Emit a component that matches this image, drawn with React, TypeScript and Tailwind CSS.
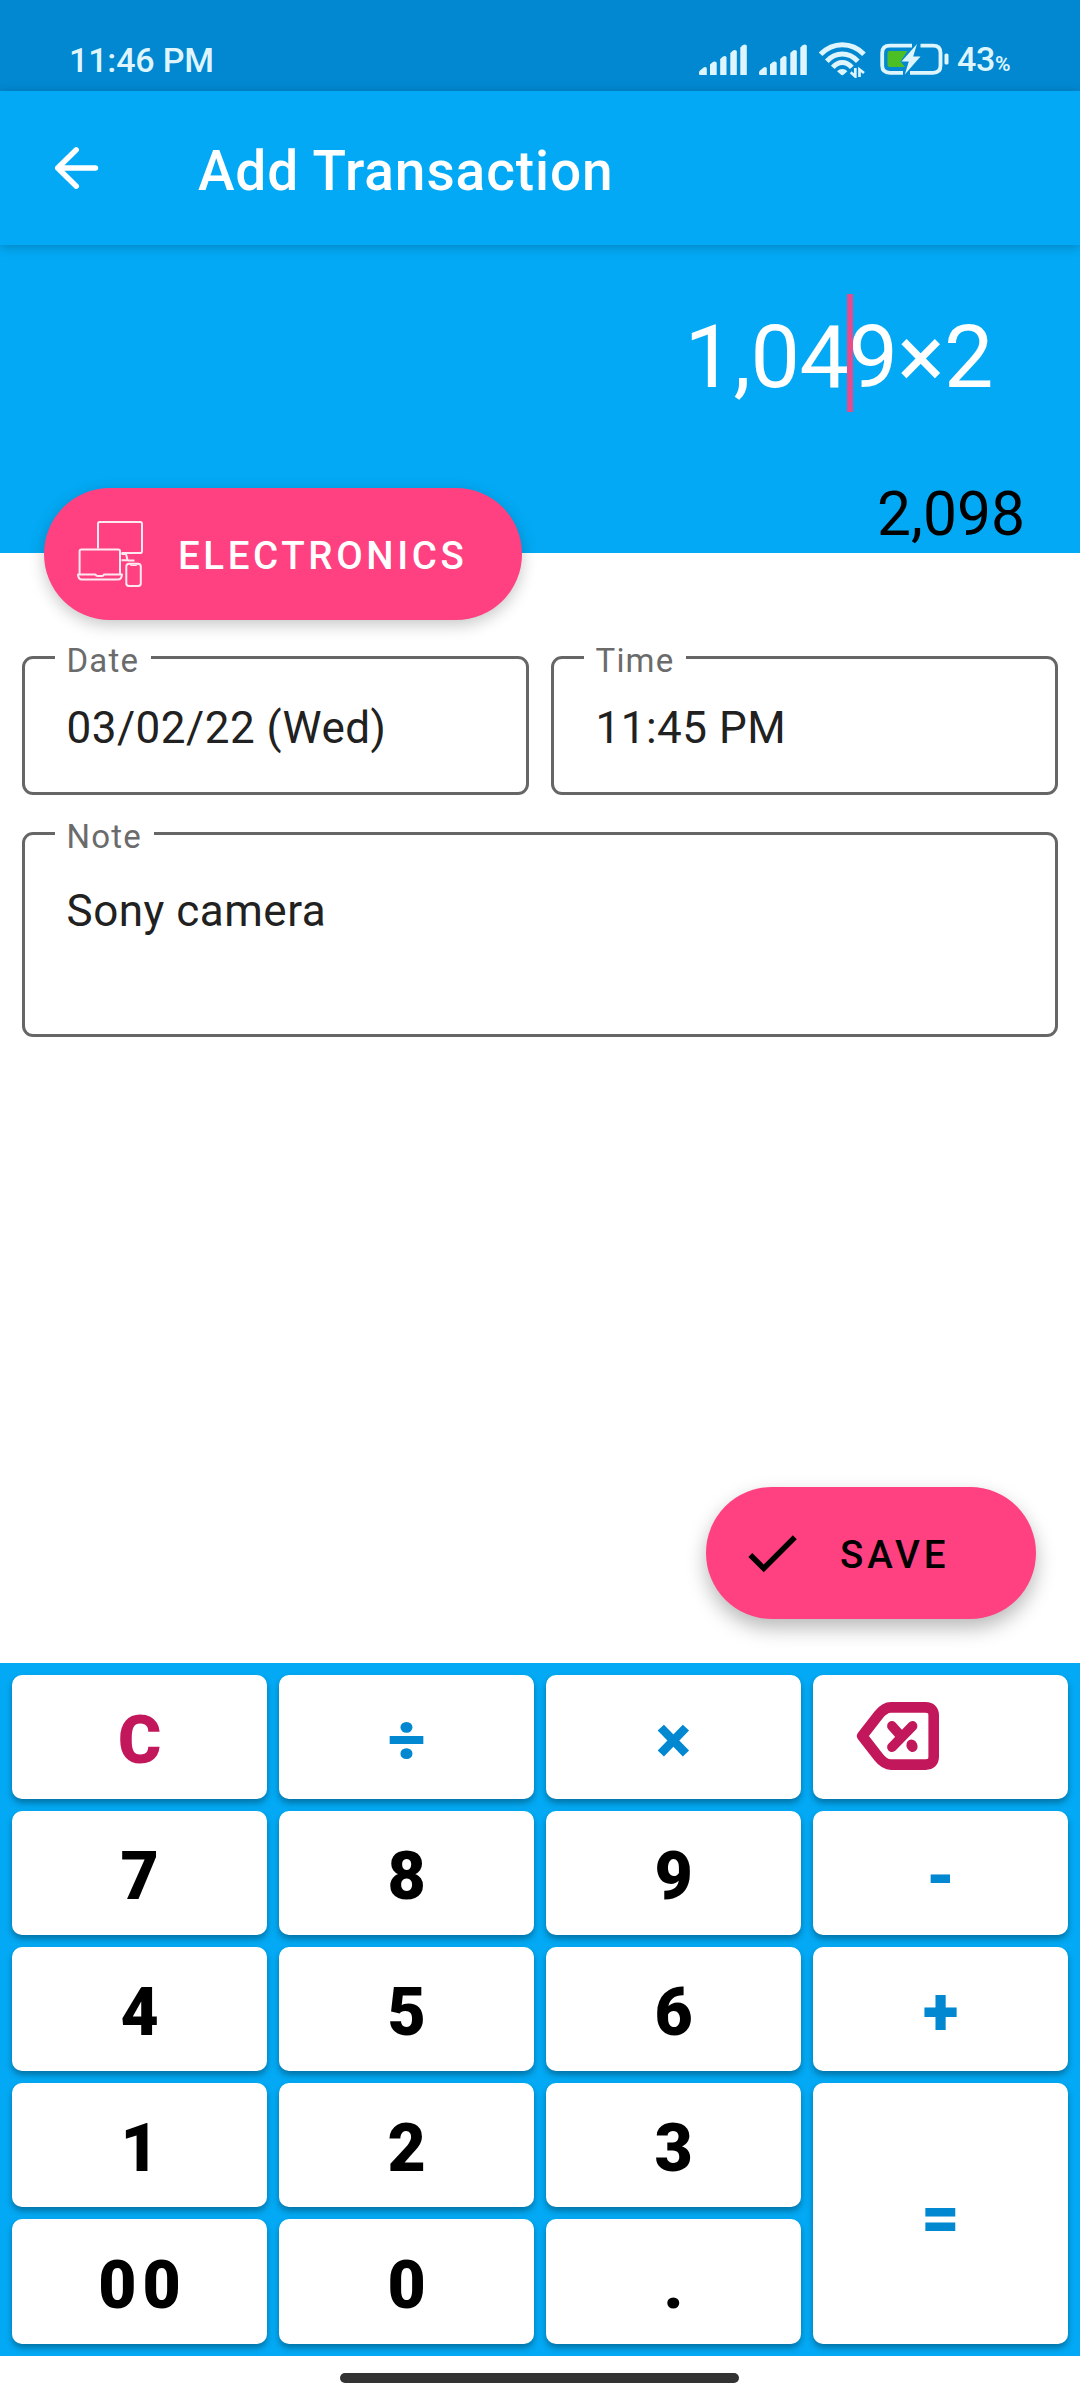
import type { ReactNode } from "react";

function SignalBars() {
  return (
    <svg width="48" height="31" viewBox="0 0 48 31" fill="#dff5fd">
      <path d="M0 28.5Q0 27.4 1 26.6L4 24Q5 23 6.2 23Q7.8 23 7.8 24.5V31H1.2Q0 31 0 29.8Z" />
      <path d="M11 20.5L13.5 18.3Q14.5 17.5 15.7 17.5Q17.7 17.5 17.7 19V31H11Z" />
      <path d="M21.2 15L23.7 12.8Q24.7 12 25.7 12Q27.5 12 27.5 13.5V31H21.2Z" />
      <path d="M31.3 9L33.8 6.8Q34.8 6 35.8 6Q37.8 6 37.8 7.5V31H31.3Z" />
      <path d="M41.3 3.5L43.8 1.2Q44.8 .4 45.8 .4Q47.8 .4 47.8 2V31H41.3Z" />
    </svg>
  );
}

function WifiIcon() {
  return (
    <svg width="47" height="36" viewBox="0 0 47 36" fill="none" stroke="#dff5fd" strokeLinecap="butt">
      <path d="M1.6 12.3Q11 2.8 23.3 2.8Q35.6 2.8 45 12.3" strokeWidth="5" />
      <path d="M7.8 19.2Q14.5 12 23.3 12Q32 12 38.8 19.2" strokeWidth="5" />
      <path d="M13.8 25.4Q18 20.4 23.3 20.4Q28.6 20.4 32.8 25.4" strokeWidth="5" />
      <path d="M18 29.3Q20.3 27 23.3 27Q26.3 27 28.4 29.3L24.8 32.6Q23.3 34 21.8 32.6Z" fill="#dff5fd" stroke="none" />
      <path d="M36.3 26V34.5L31.7 30.2M40.5 35V27.5L45 31" strokeWidth="2.7" />
    </svg>
  );
}

function BatteryIcon() {
  return (
    <svg width="69" height="33" viewBox="0 0 69 33" fill="none">
      <path d="M32 2.7H10Q2.2 2.7 2.2 10V22.5Q2.2 29.8 10 29.8H23M40.5 2.7H53Q60.5 2.7 60.5 10V22.5Q60.5 29.8 53 29.8H30" stroke="#dff5fd" strokeWidth="3.8" />
      <path d="M9.5 8H27.5L20.5 18.6L25 24H9.5Q7.5 24 7.5 22V10Q7.5 8 9.5 8Z" fill="#4cbf26" />
      <path d="M37 1L21.5 18.5H28.8L24.8 31.5L40.5 13.5H33.2Z" fill="#dff5fd" />
      <rect x="64.5" y="10.5" width="4" height="11" rx="1.6" fill="#dff5fd" />
    </svg>
  );
}

function BackArrow() {
  return (
    <svg width="44" height="44" viewBox="0 0 44 44" fill="none" stroke="#fff" strokeWidth="5.4" strokeLinecap="round" strokeLinejoin="round">
      <path d="M40.5 22H2.7M21.3 3.8L2.7 22L21.3 40.2" />
    </svg>
  );
}

function DevicesIcon() {
  return (
    <svg width="66" height="66" viewBox="0 0 66 66" fill="none" stroke="#ffe9f1" strokeWidth="2" strokeLinejoin="round">
      <path d="M21 27.5V2.8Q21 1 22.8 1H63.2Q65 1 65 2.8V30.2Q65 32 63.2 32H44.5" />
      <path d="M2.6 53V30.3Q2.6 28.5 4.4 28.5H41.2Q43 28.5 43 30.3V53" />
      <path d="M1 53.4H18.5Q19 55 20.5 55H25Q26.5 55 27 53.4H45Q44.6 58.6 41 58.6H5Q1.2 58.6 1 53.4Z" />
      <path d="M44.5 33H49L50.6 39.2H44.5M50.6 39.6H57.5" />
      <rect x="49.3" y="42.8" width="14.5" height="22.3" rx="2.8" />
      <path d="M53 43.2Q53.2 44.4 54.4 44.4H58.8Q60 44.4 60.2 43.2" strokeWidth="1.2" />
    </svg>
  );
}

function CheckIcon() {
  return (
    <svg width="66" height="66" viewBox="0 0 24 24" fill="#000">
      <path d="M9 16.17L4.83 12l-1.42 1.41L9 19 21 7l-1.41-1.41z" />
    </svg>
  );
}

function BackspaceIcon() {
  return (
    <svg width="84" height="68" viewBox="0 0 84 68" fill="none" stroke="#c2185b" strokeLinecap="round" strokeLinejoin="round">
      <path d="M6.2 34L22.5 13Q28.5 5.4 35 5.4H69.5Q77.7 5.4 77.7 13.5V54.5Q77.7 62.6 69.5 62.6H35Q28.5 62.6 22.5 55Z" strokeWidth="10.6" />
      <path d="M56.5 24L36 45.2M36 24L44 33" strokeWidth="9.8" />
      <ellipse cx="56" cy="43.8" rx="5.4" ry="6.4" transform="rotate(-25 56 43.8)" fill="#c2185b" stroke="none" />
    </svg>
  );
}

function Field({ label, value, className }: { label: string; value: string; className: string }) {
  return (
    <div className={`relative rounded-[11px] border-[3px] border-[#666] pl-[41.5px] ${className}`}>
      <span className="absolute -top-[18px] left-[30px] bg-white pr-[12px] pl-[11.5px] text-[33px] leading-[40px] tracking-[1.2px] text-[#6b6b6b]">
        {label}
      </span>
      <div className="text-[44px] leading-[52px] tracking-[0.5px] text-[#212121]">{value}</div>
    </div>
  );
}

type KeyDef = { id: string; content: ReactNode; tone: "digit" | "operator" | "clear"; tall?: boolean };

const KEYS: KeyDef[] = [
  { id: "clear", content: "C", tone: "clear" },
  { id: "divide", content: "÷", tone: "operator" },
  { id: "multiply", content: "×", tone: "operator" },
  { id: "backspace", content: <BackspaceIcon />, tone: "clear" },
  { id: "7", content: "7", tone: "digit" },
  { id: "8", content: "8", tone: "digit" },
  { id: "9", content: "9", tone: "digit" },
  { id: "minus", content: "-", tone: "operator" },
  { id: "4", content: "4", tone: "digit" },
  { id: "5", content: "5", tone: "digit" },
  { id: "6", content: "6", tone: "digit" },
  { id: "plus", content: "+", tone: "operator" },
  { id: "1", content: "1", tone: "digit" },
  { id: "2", content: "2", tone: "digit" },
  { id: "3", content: "3", tone: "digit" },
  { id: "equals", content: "=", tone: "operator", tall: true },
  { id: "00", content: "00", tone: "digit" },
  { id: "0", content: "0", tone: "digit" },
  { id: "dot", content: ".", tone: "digit" },
];

const TONES = { digit: "text-black", operator: "text-[#0288d1]", clear: "text-[#c2185b]" };

function Key({ id, content, tone, tall }: KeyDef) {
  const placement = id === "backspace" ? "justify-start pl-[43px] pb-[2px]" : "justify-center pl-[6px] pt-[8px]";
  return (
    <button
      className={`flex items-center rounded-[10px] bg-white text-[66px] leading-[78px] font-black tracking-[5.9px] shadow-[0_4px_6px_rgba(0,0,0,0.32)] ${placement} ${TONES[tone]} ${tall ? "row-span-2" : ""}`}
    >
      {content}
    </button>
  );
}

export default function App() {
  return (
    <div className="flex h-[2400px] w-[1080px] flex-col overflow-hidden bg-white font-['Roboto',sans-serif]">
      <header className="flex h-[91px] shrink-0 items-center bg-[#0288d1] pt-[30px] pl-[69px] text-[34px] leading-[40px] font-medium text-[#dff5fd]">
        <span className="-mt-[2px] tracking-[-0.15px]">11:46 PM</span>
        <div className="ml-auto flex h-[40px] w-[381px] items-start">
          <div className="pt-[3px]"><SignalBars /></div>
          <div className="ml-[12px] pt-[3px]"><SignalBars /></div>
          <div className="ml-[12px] pt-[1px]"><WifiIcon /></div>
          <div className="ml-[14px] pt-[2px]"><BatteryIcon /></div>
          <div className="-mt-[2px] ml-[8px] flex items-baseline">
            <span className="tracking-[-0.3px]">43</span>
            <span className="text-[21px] font-semibold tracking-[-0.5px]">%</span>
          </div>
        </div>
      </header>

      <nav className="relative flex h-[154px] shrink-0 items-center bg-[#03a9f4] pl-[55px] shadow-[0_2px_10px_rgba(0,0,0,0.22)]">
        <BackArrow />
        <h1 className="pt-[6px] pl-[99px] text-[55px] leading-[64px] font-medium tracking-[0.9px] text-white">Add Transaction</h1>
      </nav>

      <section className="flex h-[308px] shrink-0 flex-col items-end bg-[#03a9f4]">
        <div className="mt-[60px] mr-[87px] text-[88px] leading-[104px] tracking-[-0.45px] text-white">
          1,04
          <span className="relative">
            <span className="absolute -top-[11px] -left-[1px] h-[118px] w-[6px] bg-[#ff4081]/90" />
          </span>
          9×2
        </div>
        <div className="mt-[70px] mr-[55px] text-[60.5px] leading-[72px] text-black">2,098</div>
      </section>

      <main className="flex flex-1 flex-col">
        <button className="relative -mt-[65px] ml-[44px] flex h-[132px] w-[478px] items-center rounded-full bg-[#ff4081] pl-[33px] text-[38.5px] leading-[46px] font-medium tracking-[3.6px] text-white shadow-[0_5px_16px_rgba(0,0,0,0.22)]">
          <DevicesIcon />
          <span className="pt-[4px] pl-[35px]">ELECTRONICS</span>
        </button>
        <div className="mx-[22px] mt-[36px] flex gap-[22px]">
          <Field label="Date" value="03/02/22 (Wed)" className="h-[139px] w-[507px] pt-[43px]" />
          <Field label="Time" value="11:45 PM" className="h-[139px] w-[507px] pt-[43px]" />
        </div>
        <div className="mx-[22px] mt-[37px] flex">
          <Field label="Note" value="Sony camera" className="h-[205px] flex-1 pt-[50px]" />
        </div>
        <button className="mt-auto mr-[44px] mb-[44px] flex h-[132px] w-[330px] items-center self-end rounded-full bg-[#ff4081] pl-[33px] text-[38.5px] leading-[46px] font-medium tracking-[3.9px] text-black shadow-[0_9px_20px_rgba(0,0,0,0.28)]">
          <CheckIcon />
          <span className="pt-[4px] pl-[35px]">SAVE</span>
        </button>
      </main>

      <section className="grid h-[693px] shrink-0 grid-cols-4 grid-rows-[124px_124px_124px_124px_125px] gap-[12px] bg-[#03a9f4] p-[12px]">
        {KEYS.map((key) => (
          <Key key={key.id} {...key} />
        ))}
      </section>

      <footer className="flex h-[44px] shrink-0 justify-center bg-white pt-[17px]">
        <div className="-ml-px h-[10px] w-[399px] rounded-full bg-[#333]" />
      </footer>
    </div>
  );
}
